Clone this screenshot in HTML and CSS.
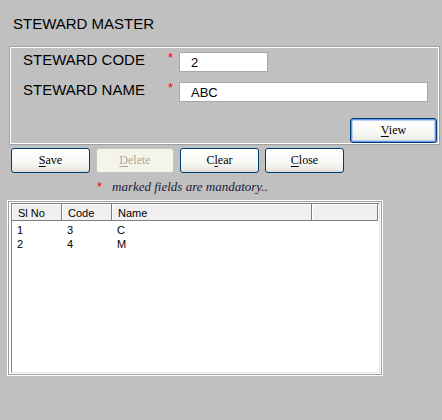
FILE: index.html
```html
<!DOCTYPE html>
<html>
<head>
<meta charset="utf-8">
<title>Steward Master</title>
<link rel="stylesheet" href="styles.css">
</head>
<body>
<div class="page">
  <div class="title">STEWARD MASTER</div>
  <div class="frame">
    <div class="row">
      <span class="label">STEWARD CODE</span><span class="req">*</span><div class="input input-code">2</div>
    </div>
    <div class="row row-gap">
      <span class="label">STEWARD NAME</span><span class="req">*</span><div class="input input-name">ABC</div>
    </div>
    <div class="view-row">
      <button class="btn btn-default"><u>V</u>iew</button>
    </div>
  </div>
  <div class="actions">
    <button class="btn"><u>S</u>ave</button>
    <button class="btn btn-disabled btn-narrow"><u>D</u>elete</button>
    <button class="btn">C<u>l</u>ear</button>
    <button class="btn"><u>C</u>lose</button>
  </div>
  <div class="note"><span class="note-star">*</span><span class="note-text">marked fields are mandatory..</span></div>
  <div class="list">
    <div class="list-frame">
      <div class="list-pad">
        <div class="grid">
          <div class="head">
            <div class="hcell c1">Sl No</div>
            <div class="hcell c2">Code</div>
            <div class="hcell c3">Name</div>
            <div class="hcell c4"></div>
          </div>
          <div class="body">
            <div class="trow"><div class="cell c1">1</div><div class="cell c2">3</div><div class="cell c3">C</div></div>
            <div class="trow"><div class="cell c1">2</div><div class="cell c2">4</div><div class="cell c3">M</div></div>
          </div>
        </div>
      </div>
    </div>
  </div>
</div>
</body>
</html>
```

FILE: styles.css
```css
* { box-sizing: border-box; }
html, body {
  margin: 0;
  padding: 0;
  background: #c0c0c0;
}
body {
  width: 442px;
  height: 420px;
  overflow: hidden;
  font-family: "Liberation Sans", Arial, sans-serif;
  color: #000;
}
.page {
  display: flex;
  flex-direction: column;
  align-items: flex-start;
}
.title {
  margin: 15px 0 13px 13px;
  font-size: 15px;
  line-height: 18px;
}
.frame {
  margin-left: 9px;
  width: 431px;
  border: 1px solid #a0a0a0;
  box-shadow: inset 0 0 0 1px #ffffff;
  padding: 5px 2px 1px 13px;
  display: flex;
  flex-direction: column;
}
.row {
  display: flex;
  align-items: flex-start;
  height: 20px;
}
.row-gap { margin-top: 10px; }
.label {
  width: 145px;
  font-size: 15px;
  line-height: 16px;
  white-space: nowrap;
}
.req {
  width: 11px;
  margin-top: -2px;
  font-size: 13px;
  line-height: 16px;
  color: #ff0000;
}
.input {
  height: 20px;
  background: #ffffff;
  border: 1px solid #a6a6a6;
  padding: 2px 0 0 11px;
  font-size: 13px;
  line-height: 16px;
}
.input-code { width: 89px; }
.input-name { width: 249px; }
.view-row {
  margin-top: 16px;
  display: flex;
  justify-content: flex-end;
}
.btn {
  width: 79px;
  height: 25px;
  margin: 0;
  padding: 0;
  border: 1px solid #003c74;
  border-radius: 3px;
  background: linear-gradient(to bottom, #ffffff 0%, #f7f7f4 60%, #ecebe6 88%, #dcdad0 100%);
  font-family: "Liberation Serif", "Times New Roman", serif;
  font-size: 12px;
  line-height: 23px;
  color: #000;
  text-align: center;
}
.btn u {
  text-decoration: underline;
  text-underline-offset: 2px;
}
.btn-default {
  width: 87px;
  box-shadow: inset 0 0 0 1px #6a96df, inset 0 0 0 2px #bcd2f5;
}
.btn-disabled {
  border-color: #c9c7ba;
  background: #f5f4ea;
  color: #aca899;
}
.btn-narrow { width: 78px; }
.actions {
  margin: 3px 0 0 11px;
  display: flex;
  gap: 6px;
}
.note {
  margin: 6px 0 0 97px;
  display: flex;
  align-items: baseline;
  line-height: 16px;
}
.note-star {
  width: 15px;
  font-size: 13px;
  color: #ff0000;
}
.note-text {
  font-family: "Liberation Serif", "Times New Roman", serif;
  font-style: italic;
  font-size: 13px;
  color: #1c1c3a;
}
.list {
  margin: 5px 0 0 7px;
  width: 376px;
  height: 176px;
  border: 1px solid #ffffff;
}
.list-frame {
  height: 100%;
  border: 1px solid #a0a0a0;
}
.list-pad {
  height: 100%;
  background: #ffffff;
  padding: 1px 1px 1px 2px;
}
.grid {
  height: 100%;
  border-left: 1px solid #808080;
  border-top: 1px solid #808080;
  border-right: 1px solid #e3e3e3;
  border-bottom: 1px solid #e3e3e3;
  background: #ffffff;
  font-size: 11px;
}
.head {
  display: flex;
  height: 17px;
  border-bottom: 1px solid #808080;
  background: #f0f0f0;
  width: 366px;
}
.hcell {
  height: 16px;
  padding: 2px 0 0 6px;
  line-height: 14px;
  border-right: 1px solid #808080;
  box-shadow: inset 1px 0 0 #ffffff, inset 0 1px 0 #ffffff;
  white-space: nowrap;
}
.c1 { width: 50px; }
.c2 { width: 50px; }
.c3 { width: 200px; }
.c4 { width: 66px; }
.body { padding-top: 2px; }
.trow {
  display: flex;
  height: 14px;
  line-height: 14px;
}
.cell {
  padding-left: 5px;
  white-space: nowrap;
}
```
